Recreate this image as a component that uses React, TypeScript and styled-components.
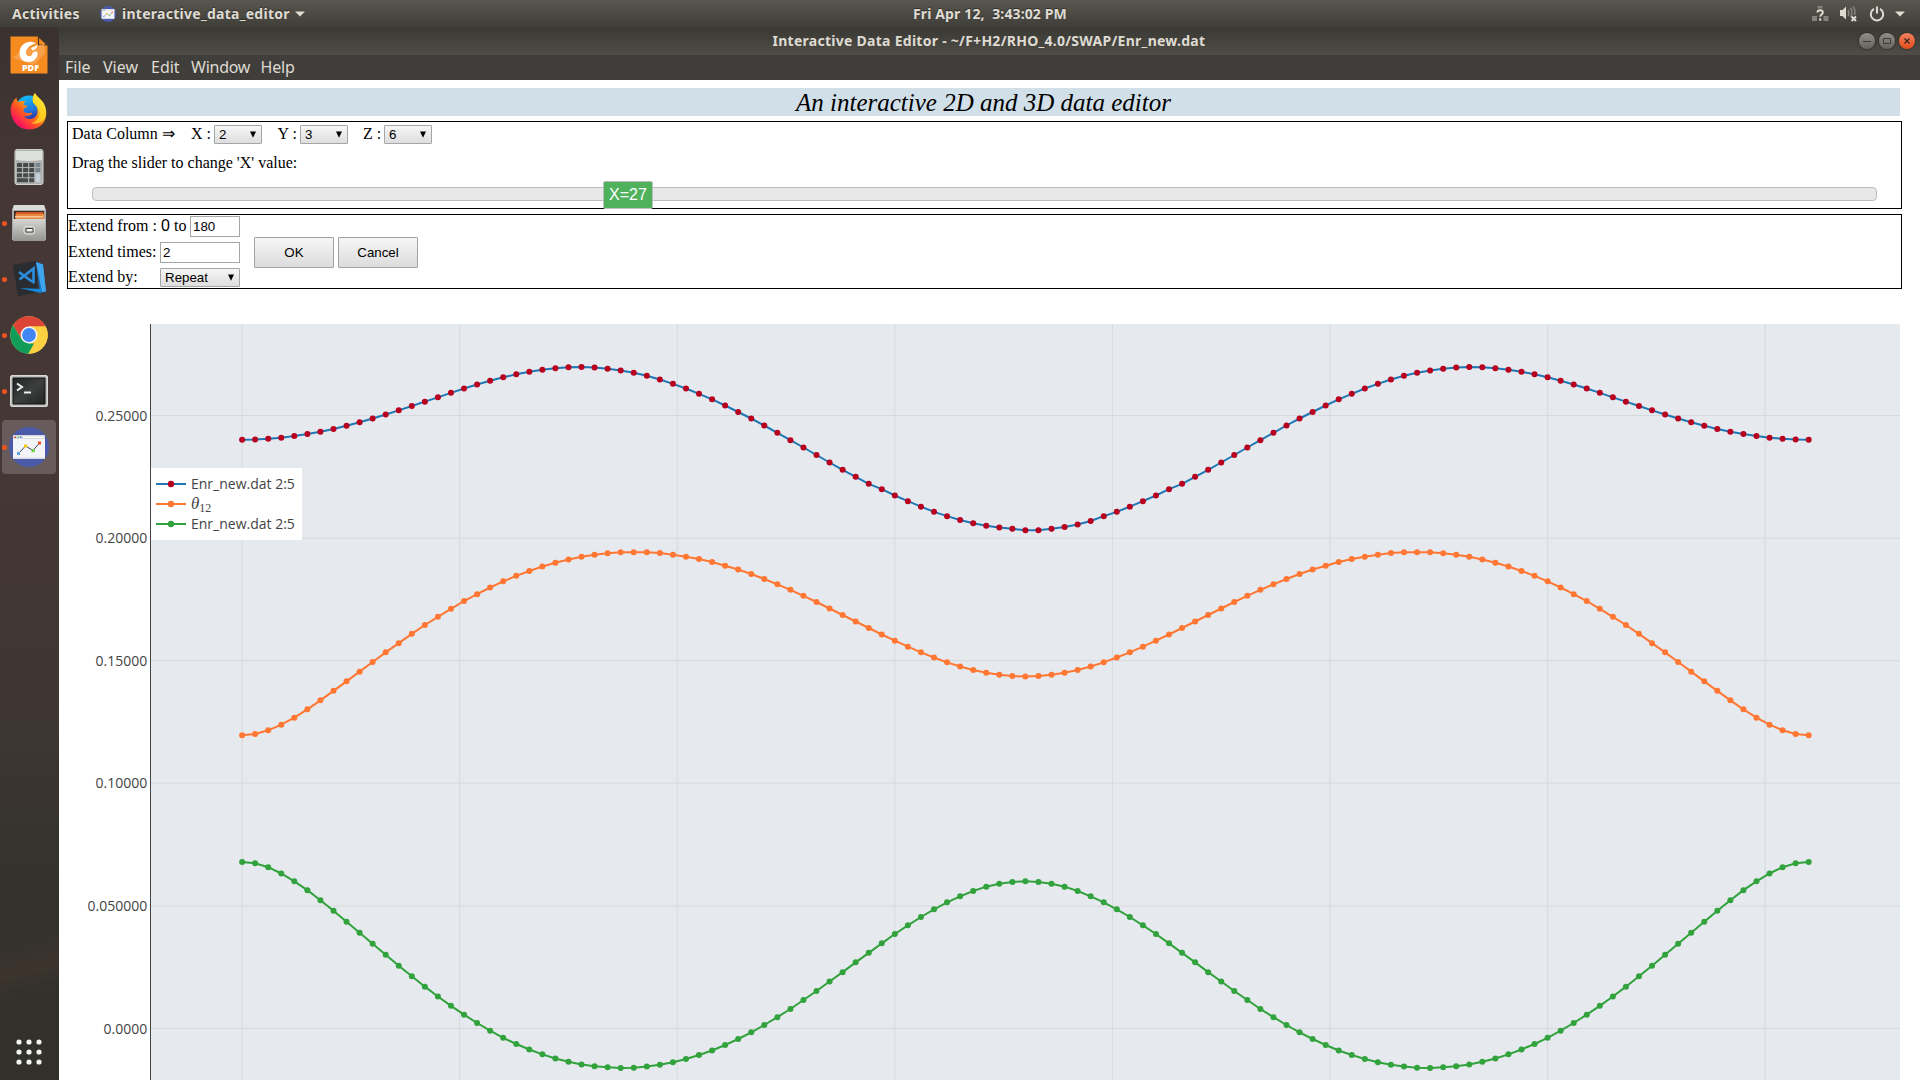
import React from "react";
import styled, { createGlobalStyle } from "styled-components";

const UI = `"Noto Sans", "Open Sans", sans-serif`;

const GlobalStyle = createGlobalStyle`
  html, body { margin: 0; padding: 0; background: #fff; overflow: hidden; }
  *, *::before, *::after { box-sizing: border-box; }
  svg { display: block; }
`;

const Desktop = styled.div`
  width: 1920px;
  height: 1080px;
  display: flex;
  flex-direction: column;
  overflow: hidden;
`;

const TopBar = styled.header`
  height: 27px;
  flex: none;
  display: grid;
  grid-template-columns: 913px 156px 1fr;
  align-items: center;
  background: linear-gradient(#5a564f, #3f3e39);
`;

const TopGroup = styled.div<{ $end?: boolean }>`
  display: flex;
  align-items: center;
  justify-content: ${(p) => (p.$end ? "flex-end" : "flex-start")};
  padding: ${(p) => (p.$end ? "0 15px 0 0" : "0 0 0 12px")};
`;

const TopLabel = styled.span<{ $width: number; $spacing?: number }>`
  width: ${(p) => p.$width}px;
  font: 700 14px/26px ${UI};
  letter-spacing: ${(p) => p.$spacing ?? 0.27}px;
  white-space: pre;
  color: #dfdbd2;
  text-shadow: 0 -1px 1px rgba(0, 0, 0, 0.4);
`;

const Gap = styled.span<{ $w: number }>`
  flex: none;
  width: ${(p) => p.$w}px;
`;

const Body = styled.div`
  flex: 1;
  min-height: 0;
  display: flex;
`;

const Dock = styled.nav`
  width: 59px;
  flex: none;
  display: flex;
  flex-direction: column;
  justify-content: space-between;
  background: 
    linear-gradient(165deg, transparent 86%, rgba(100, 60, 50, 0.14) 87.5%, rgba(105, 62, 50, 0.2) 89%, rgba(90, 55, 45, 0.06) 90.5%, transparent 94%),
    linear-gradient(#3a322f 0, #443735 14%, #443735 42%, #3e3633 66%, #33322d 82%, #31302b);
`;

const DockItems = styled.div`
  display: flex;
  flex-direction: column;
  gap: 2px;
  padding: 1px 0 0 2px;
`;

const DockSlot = styled.div<{ $active?: boolean }>`
  width: 54px;
  height: 54px;
  border-radius: 4px;
  display: grid;
  grid-template-columns: 5px 1fr 5px;
  align-items: center;
  justify-items: center;
  background: ${(p) => (p.$active ? "rgba(255,255,255,0.19)" : "transparent")};
`;

const Running = styled.i<{ $on?: boolean }>`
  width: 5px;
  height: 5px;
  border-radius: 50%;
  background: ${(p) => (p.$on ? "#f0541e" : "transparent")};
`;

const AppsButton = styled.div`
  width: 58px;
  height: 56px;
  display: flex;
  align-items: center;
  justify-content: center;
`;

const Window = styled.main`
  flex: 1;
  min-width: 0;
  display: flex;
  flex-direction: column;
  background: #fff;
`;

const TitleBar = styled.div`
  height: 28px;
  flex: none;
  display: grid;
  grid-template-columns: 1fr auto 1fr;
  align-items: center;
  background: linear-gradient(#393834, #504d46);
`;

const WindowTitle = styled.span`
  grid-column: 2;
  width: 433px;
  margin-left: -1px;
  font: 700 14px/28px ${UI};
  letter-spacing: 0.27px;
  white-space: nowrap;
  color: #dfdbd2;
`;

const WindowButtons = styled.div`
  display: flex;
  justify-content: flex-end;
  gap: 4px;
  padding-right: 5px;
`;

const RoundButton = styled.span<{ $close?: boolean }>`
  width: 16px;
  height: 16px;
  border-radius: 50%;
  display: flex;
  align-items: center;
  justify-content: center;
  background: ${(p) => (p.$close ? "linear-gradient(#f48060, #e14e1b)" : "linear-gradient(#8f8d86, #66645e)")};
  box-shadow: 0 0 1px 1px rgba(35, 34, 30, 0.55);
`;

const MenuBar = styled.div`
  height: 25px;
  flex: none;
  display: flex;
  padding-left: 6px;
  background: #403e3a;
`;

const MenuItem = styled.span<{ $width: number; $spacing: number }>`
  width: ${(p) => p.$width}px;
  font: 400 16px/24px ${UI};
  letter-spacing: ${(p) => p.$spacing}px;
  color: #dfdbd2;
`;

const Page = styled.div`
  flex: 1;
  min-height: 0;
  display: flex;
  flex-direction: column;
  padding: 8px 18px 0 8px;
  font: 16px/18px "Liberation Serif", serif;
  color: #000;
`;

const Banner = styled.h1`
  flex: none;
  width: 1833px;
  height: 28px;
  margin: 0 0 5px;
  text-align: center;
  font: italic 400 25px/30px "Liberation Serif", serif;
  background: #d1dfe8;
`;

const Panel = styled.section<{ $height: number; $after: number }>`
  flex: none;
  width: 1835px;
  height: ${(p) => p.$height}px;
  margin-bottom: ${(p) => p.$after}px;
  border: 1px solid #000;
`;

const ColumnRow = styled.div`
  display: flex;
  align-items: center;
  height: 19px;
  margin: 3px 0 0 4px;
`;

const Label = styled.span<{ $width: number }>`
  flex: none;
  width: ${(p) => p.$width}px;
  padding-bottom: 2px;
  white-space: nowrap;
`;

const Hint = styled.div`
  margin: 10px 0 0 4px;
  line-height: 18px;
`;

const SliderRow = styled.div`
  display: flex;
  align-items: center;
  height: 28px;
  margin: 8px 24px 0;
`;

const Track = styled.div`
  position: relative;
  flex: 1;
  height: 14px;
  border: 1px solid #bdbdbd;
  border-radius: 4px;
  background: #e8e8e8;
`;

const Handle = styled.span`
  position: absolute;
  top: -7px;
  left: 510px;
  width: 50px;
  height: 28px;
  border: 1px solid #bdbdbd;
  border-radius: 2px;
  background: #50b15c;
  color: #fff;
  text-align: center;
  font: 16px/26px "Liberation Sans", sans-serif;
`;

const SelectBox = styled.span<{ $width: number }>`
  flex: none;
  align-self: flex-start;
  width: ${(p) => p.$width}px;
  height: 19px;
  display: flex;
  align-items: center;
  justify-content: space-between;
  padding: 0 5px 0 4px;
  border: 1px solid #a6a6a6;
  border-radius: 1px;
  background: linear-gradient(#f6f6f6, #dedede);
  font: 13.33px/17px "Liberation Sans", sans-serif;
`;

const ExtendLayout = styled.div`
  display: flex;
  align-items: center;
  height: 100%;
`;

const ExtendFields = styled.div`
  width: 172px;
  height: 73px;
  padding-top: 1px;
  display: flex;
  flex-direction: column;
  gap: 5px;
`;

const Field = styled.div`
  display: flex;
  align-items: center;
`;

const TextInput = styled.input<{ $width: number }>`
  width: ${(p) => p.$width}px;
  height: 21px;
  margin: 0;
  padding: 1px 2px;
  border: 1px solid #a6a6a6;
  border-radius: 0;
  background: #fff;
  color: #000;
  font: 13.33px "Liberation Sans", sans-serif;
`;

const Zero = styled.span`
  width: 13px;
  padding-bottom: 2px;
  font-family: "Liberation Sans", sans-serif;
`;

const Actions = styled.div`
  display: flex;
  gap: 4px;
  margin: 2px 0 0 14px;
`;

const PushButton = styled.button`
  width: 80px;
  height: 31px;
  padding: 0;
  border: 1px solid #a2a2a2;
  border-radius: 1px;
  background: linear-gradient(#f6f6f6, #dcdcdc);
  color: #000;
  font: 13.33px "Liberation Sans", sans-serif;
`;

const ChartArea = styled.div`
  position: relative;
  flex: 1;
  min-height: 0;
  width: 1833px;
`;

const Legend = styled.div`
  position: absolute;
  left: 84px;
  top: 144px;
  width: 151px;
  height: 72px;
  padding: 6px 0 0 5px;
  background: #fff;
`;

const LegendItem = styled.div`
  display: flex;
  align-items: center;
  gap: 5px;
  height: 20px;
  font: 14px/20px "Open Sans", sans-serif;
  color: #444;
  white-space: nowrap;
`;

const Theta = styled.span`
  font: italic 17px/20px "Liberation Serif", serif;
  color: #444;
  sub {
    font: 12px/1 "Liberation Serif", serif;
    vertical-align: -3px;
  }
`;

/* Heights of the first 61 samples, in thirds of a pixel below each trace's origin.
   The samples repeat mirrored up to 360 degrees. */
const mirror = (half: number[]) => [...half, ...half.slice(0, -1).reverse()];

const redHalf = [
  269.5, 268.5, 266.5, 263, 258, 252, 245, 237, 227.5, 217, 205.5, 193.5, 181, 168, 155, 142, 128.5, 115.5, 103.5, 92.5,
  82, 73, 65.5, 59, 54.5, 51.5, 51, 52.5, 56.5, 61.5, 68.5, 77, 88.5, 101.5, 115.5, 131.5, 148, 166.5, 186, 205.5,
  226.5, 248.5, 270.5, 292.5, 315, 337.5, 359.5, 380.5, 401.5, 417.5, 436.5, 453.5, 470, 485.5, 498.5, 510, 519.5,
  527.5, 532.5, 536.5, 541,
];
const orangeHalf = [
  1156, 1152, 1141, 1124, 1103, 1078, 1051, 1022.5, 994, 965, 936, 907, 879.5, 851.5, 825, 800.5, 776.5, 753, 732.5,
  712.5, 694, 677.5, 663, 649.5, 638.5, 628.5, 620.5, 614.5, 609.5, 607, 606.5, 607, 609, 614, 620, 627, 636, 647,
  658.5, 672, 687, 703, 719.5, 737.5, 756, 775.5, 795, 814.5, 834, 853.5, 872, 890, 907, 922.5, 937, 949.5, 960, 968,
  974, 978, 979.5,
];
const greenHalf = [
  66, 70, 81.5, 100.5, 124, 150.5, 180.5, 212, 245, 278, 311, 344, 377, 408.5, 440, 469.5, 497.5, 524, 549, 572, 593.5,
  612, 628.5, 643, 655.5, 665, 673.5, 679, 682, 684, 683, 679.5, 674.5, 666.5, 657, 645, 631.5, 615, 597, 577, 555,
  531.5, 507, 480, 453, 424.5, 396.5, 367, 338.5, 310, 282, 256, 231, 208, 187, 169, 153, 140, 131, 126, 124,
];

const red = mirror(redHalf);
red[61] = 540.5;
red[62] = 536.5;
red[63] = 531;
red[64] = 523.5;
red[65] = 513;

const traces = [
  { line: "#1f77b4", dot: "#b8001f", origin: 26, values: red },
  { line: "#ff7733", dot: "#ff7733", origin: 26, values: mirror(orangeHalf) },
  { line: "#31a23c", dot: "#31a23c", origin: 516, values: mirror(greenHalf) },
];

const ticks = [
  { text: "0.25000", y: 91.5 },
  { text: "0.20000", y: 214.3 },
  { text: "0.15000", y: 336.6 },
  { text: "0.10000", y: 459.2 },
  { text: "0.050000", y: 582 },
  { text: "0.0000", y: 704.5 },
];

const Chart = () => (
  <svg width="1833" height="756" viewBox="0 0 1833 756">
    <rect x="84" y="0" width="1749" height="756" fill="#e6e9ee" />
    {[0, 1, 2, 3, 4, 5, 6, 7].map((n) => (
      <line key={n} x1={175.1 + n * 217.58} x2={175.1 + n * 217.58} y1="0" y2="756" stroke="#d7dadc" />
    ))}
    {ticks.map((t) => (
      <g key={t.text}>
        <line x1="84" x2="1833" y1={t.y} y2={t.y} stroke="#d7dadc" />
        <text x="80.2" y={t.y + 5.1} textAnchor="end" fontFamily='"Open Sans", sans-serif' fontSize="14" fill="#444">
          {t.text}
        </text>
      </g>
    ))}
    <line x1="83.5" x2="83.5" y1="0" y2="756" stroke="#444" />
    {traces.map((t) => {
      const pts = t.values.map((v, i) => [175.1 + i * 13.055, t.origin + v / 3]);
      return (
        <g key={t.line}>
          <polyline points={pts.map((p) => p.join(",")).join(" ")} fill="none" stroke={t.line} strokeWidth="2" />
          {pts.map((p, i) => (
            <circle key={i} cx={p[0]} cy={p[1]} r="3" fill={t.dot} />
          ))}
        </g>
      );
    })}
  </svg>
);

const LegendKey = ({ line, dot }: { line: string; dot: string }) => (
  <svg width="30" height="8">
    <path d="M0 4H30" stroke={line} strokeWidth="2" />
    <circle cx="15" cy="4" r="3.2" fill={dot} />
  </svg>
);

const Select = ({ value, width }: { value: string; width: number }) => (
  <SelectBox $width={width}>
    {value}
    <svg width="6" height="7">
      <path d="M0 .5h6L3 6.8z" fill="#000" />
    </svg>
  </SelectBox>
);

const EditorIcon = ({ size }: { size: number }) => (
  <svg width={size} height={size} viewBox="0 0 40 40">
    <circle cx="20" cy="20" r="20" fill="#4a5aa8" />
    <path d="M4 8h32v24H4z" fill="#f3f4f8" />
    <path d="M4 8h32v4H4zM4 30.5h32V32H4z" fill="#d8dadf" />
    <path d="M14 9.5h20v1.5H14z" fill="#fff" />
    <path d="M5.5 9.5h1.5v1.5H5.5z" fill="#e33" />
    <path d="M8.5 9.5h1.5v1.5H8.5z" fill="#5c5" />
    <path d="M11 9.5h1.5v1.5H11z" fill="#58d" />
    <path d="M9.5 26.5 16.5 19l7.5 4.5 6.5-7.5" fill="none" stroke="#444a58" />
    <path d="M8 25h3v3H8z" fill="#5aa5df" />
    <path d="M15 17.5h3.2v3H15z" fill="#f7cd12" />
    <path d="M22.5 22.2h3.2v3h-3.2z" fill="#6bd03c" />
    <path d="M29 14.5h3v3h-3z" fill="#f0502a" />
  </svg>
);

const PdfIcon = () => (
  <svg width="38" height="38" viewBox="0 0 38 38">
    <path d="M.5.5h28L37.5 9v28.5H.5z" fill="#f68b20" />
    <path d="M28.5.5v8.500h9z" fill="#f68b20" stroke="#40332d" strokeWidth="1.2" />
    <path d="M3 22 12 13l22-5 1.5 9L24 29z" fill="#faa857" opacity=".75" />
    <path d="M26 7.5C19 3 9.500 8 9.500 17c0 6 4 9 9 9 6 0 9.500-4.500 9-10-3-1.500-5 .5-5.500 2.500-.5 2.500-5.500 2.500-6-1C15.500 12 21 8.500 26 7.500z" fill="#fff" />
    <path d="M21 12c3-1.500 5.500-2 6.500-4-.5 4-1.500 5.500-5 6.500z" fill="#fff" />
    <text x="20.5" y="35" textAnchor="middle" fontFamily='"Open Sans", sans-serif' fontWeight="800" fontSize="9" fill="#fff">PDF</text>
  </svg>
);

const FirefoxIcon = () => (
  <svg width="38" height="38" viewBox="0 0 38 38">
    <defs>
      <linearGradient id="fx" x1="1" y1="0" x2="0.1" y2="1">
        <stop offset="0.1" stopColor="#fff13a" />
        <stop offset="0.42" stopColor="#ffa20f" />
        <stop offset="0.62" stopColor="#ff5622" />
        <stop offset="0.85" stopColor="#f9155d" />
      </linearGradient>
      <linearGradient id="fxb" x1="0.3" y1="0" x2="0.6" y2="1">
        <stop offset="0" stopColor="#12c0f8" />
        <stop offset="0.6" stopColor="#2470d8" />
        <stop offset="1" stopColor="#3b1c86" />
      </linearGradient>
    </defs>
    <circle cx="19" cy="17" r="13.5" fill="url(#fxb)" />
    <path d="M6.500 5.500c0 2.500 1 4 2 4.500 2-1 5-1.300 7-.5-1.500 1-2 2-2 3.500l4 .8c-.5 2-4 2.700-4 4.700 0 1.500 1.500 2 3 2.500 2 .5 3.500-.5 5-.3 1 .3.500 1.800-1 2.300-2 .8-4.500 1.500-7 1 5 6 15 2.500 14-6-.2-3-1-5-4-7-2-3-.5-8 1.500-10 1 3 4 4.500 7 8 7.500 8.500 6.500 28-13 28.500C6 37.500-1 25 1 14.500 2 11 3.500 8 6.500 5.500z" fill="url(#fx)" />
    <path d="M25 1c1 3 4 4.500 7 8 5 6 5 15 1 20-3 2-8 3-12 2.500 8-2.500 10-10 7-15-2-3.500-5-4-5-7 0-4 1-7 2-8.500z" fill="#ffe52c" opacity=".65" />
  </svg>
);

const CalculatorIcon = () => (
  <svg width="30" height="36" viewBox="0 0 30 36">
    <rect x="1" y=".5" width="28" height="35" rx="2" fill="#aeb0ad" stroke="#d1d2cf" />
    <path d="M2 2h26v9q-13 2-26 0z" fill="#dde0da" />
    {[0, 1, 2, 3].map((r) =>
      (r === 3 ? [0, 2] : [0, 1, 2]).map((c) => (
        <rect key={`${r}${c}`} x={3 + c * 6.1} y={14 + r * 5.1} width={r === 3 && c === 0 ? 11 : 5} height="4" rx=".6" fill="#454a4b" />
      ))
    )}
    <path d="M21.5 14h4.800v4h-4.800zM21.500 19.100h4.800v4h-4.800z" fill="#79858d" />
    <path d="M21.5 24.200h4.800v9h-4.800z" fill="#c3d0da" />
  </svg>
);

const FilesIcon = () => (
  <svg width="36" height="38" viewBox="0 0 36 38">
    <defs>
      <linearGradient id="fl" x1="0" y1="0" x2="0" y2="1">
        <stop offset="0" stopColor="#d5d5d3" />
        <stop offset="1" stopColor="#949492" />
      </linearGradient>
    </defs>
    <path d="M3 1h30l2 5v30H1V6z" fill="#aaa" />
    <path d="M3 1h30l1.500 5h-33z" fill="#dadad8" />
    <path d="M3 7h30v9H3z" fill="#3f2b24" />
    <path d="M4.500 9.500h29L33 15H4.500z" fill="#e98842" />
    <path d="M5 8h27v2H5z" fill="#d35b27" />
    <path d="M4 12h28v1.500H4z" fill="#f6c795" />
    <path d="M2 15h32v22H2z" fill="url(#fl)" />
    <rect x="13" y="22.5" width="10.5" height="7.5" rx="2" fill="#b4b4b2" stroke="#e2e2e0" />
    <path d="M15 24.500h7v3.500h-7z" fill="#f3f3f1" stroke="#444" />
  </svg>
);

const CodeIcon = () => (
  <svg width="36" height="38" viewBox="0 0 36 38">
    <path d="M2 5 25 1l2 31L7 36.500z" fill="#292d31" />
    <path d="m25 2 7 2.500 3 27L29 33z" fill="#0a73c4" />
    <path d="m25 2 7 2.500 3 27-4 .5z" fill="#3fa4ec" />
    <path d="m8.500 28 22.500 1-1.500 4z" fill="#1687d9" />
    <path d="m8 12 13 9.500M8.500 19.500 22.500 8.500v15" fill="none" stroke="#2b8ddd" strokeWidth="2.6" />
  </svg>
);

const ChromeIcon = () => (
  <svg width="38" height="38" viewBox="0 0 38 38">
    <circle cx="19" cy="19" r="18.7" fill="#fdd041" />
    <path d="M19 10.500h16.700A18.700 18.700 0 0 0 3 9.300L11.500 23z" fill="#dc4437" />
    <path d="M3 9.300 11.600 23.300 19 27.500h7.300L18.300 37.700A18.700 18.700 0 0 1 3 9.300z" fill="#119d59" />
    <path d="m26.400 23.300-8.100 14.400A18.700 18.700 0 0 0 35.700 10.500H19z" fill="#fdd041" />
    <circle cx="19" cy="19" r="8.5" fill="#f2f3f5" />
    <circle cx="19" cy="19" r="6.9" fill="#4285f4" />
  </svg>
);

const TerminalIcon = () => (
  <svg width="38" height="32" viewBox="0 0 38 32">
    <defs>
      <linearGradient id="tm" x1="0" y1="0" x2="1" y2="1">
        <stop offset="0" stopColor="#202326" />
        <stop offset=".5" stopColor="#3d3f3e" />
        <stop offset="1" stopColor="#222423" />
      </linearGradient>
    </defs>
    <rect x=".5" y=".5" width="37" height="31" rx="1.5" fill="#bfc0be" stroke="#d7d7d5" />
    <path d="M3 3h32v26H3z" fill="url(#tm)" stroke="#111" />
    <path d="m7 8.500 5 3.500-5 3.500M14 17.500h7" fill="none" stroke="#eee" strokeWidth="2" />
  </svg>
);

const dockItems = [
  { Icon: PdfIcon, running: false },
  { Icon: FirefoxIcon, running: false },
  { Icon: CalculatorIcon, running: false },
  { Icon: FilesIcon, running: true },
  { Icon: CodeIcon, running: true },
  { Icon: ChromeIcon, running: true },
  { Icon: TerminalIcon, running: true },
];

const DownArrow = () => (
  <svg width="10" height="6">
    <path d="M0 .5h10L5 5.500z" fill="#dfdbd2" />
  </svg>
);

const NetworkIcon = () => (
  <svg width="17" height="17" viewBox="0 0 17 17">
    <path d="M5.500 1h5v2.500h-5zM0 11h5v5H0zM11.500 11h5v5h-5z" fill="#85827b" />
    <path d="M5.500 7.500c0-3 5.300-3 5.300 0 0 2-2.600 2-2.600 4.300M8.200 13.300v2.400" fill="none" stroke="#dfdbd2" strokeWidth="2" />
  </svg>
);

const VolumeIcon = () => (
  <svg width="17" height="17" viewBox="0 0 17 17">
    <path d="M0 5h2.500L6 1.500v13L2.500 11H0z" fill="#dfdbd2" />
    <path d="M8 5q2 3 0 6M10.500 3q3 4.500 0 9M13 1.500q3 4 1.500 8.500" fill="none" stroke="#85827b" strokeWidth="1.6" />
    <path d="m11.500 11.500 4.500 4.500m0-4.500L11.500 16" stroke="#dfdbd2" strokeWidth="2" />
  </svg>
);

const PowerIcon = () => (
  <svg width="16" height="16" viewBox="0 0 16 16">
    <path d="M5 2.800a6.200 6.200 0 1 0 6 0M8 .5v7" fill="none" stroke="#dfdbd2" strokeWidth="2" />
  </svg>
);

export default function App() {
  return (
    <Desktop>
      <GlobalStyle />
      <TopBar>
        <TopGroup>
          <TopLabel $width={88}>Activities</TopLabel>
          <EditorIcon size={16} />
          <Gap $w={6} />
          <TopLabel $width={173}>interactive_data_editor</TopLabel>
          <DownArrow />
        </TopGroup>
        <TopLabel $width={156} $spacing={0.13}>{"Fri Apr 12,  3:43:02 PM"}</TopLabel>
        <TopGroup $end>
          <NetworkIcon />
          <Gap $w={11} />
          <VolumeIcon />
          <Gap $w={12} />
          <PowerIcon />
          <Gap $w={10} />
          <DownArrow />
        </TopGroup>
      </TopBar>
      <Body>
        <Dock>
          <DockItems>
            {dockItems.map(({ Icon, running }, i) => (
              <DockSlot key={i}>
                <Running $on={running} />
                <Icon />
              </DockSlot>
            ))}
            <DockSlot $active>
              <Running $on />
              <EditorIcon size={40} />
            </DockSlot>
          </DockItems>
          <AppsButton>
            <svg width="26" height="26">
              {[3, 13, 23].map((y) => [3, 13, 23].map((x) => <circle key={`${x}-${y}`} cx={x} cy={y} r="2.6" fill="#f4f4f2" />))}
            </svg>
          </AppsButton>
        </Dock>
        <Window>
          <TitleBar>
            <WindowTitle>Interactive Data Editor - ~/F+H2/RHO_4.0/SWAP/Enr_new.dat</WindowTitle>
            <WindowButtons>
              <RoundButton>
                <svg width="8" height="8"><path d="M0 4.500h8" stroke="#3c3b37" /></svg>
              </RoundButton>
              <RoundButton>
                <svg width="8" height="8"><path d="M.5 1.500h7v5h-7z" fill="none" stroke="#3c3b37" /></svg>
              </RoundButton>
              <RoundButton $close>
                <svg width="8" height="8"><path d="m1.500 1.500 5 5m0-5-5 5" stroke="#3c2a22" strokeWidth="1.3" /></svg>
              </RoundButton>
            </WindowButtons>
          </TitleBar>
          <MenuBar>
            <MenuItem $width={38} $spacing={0}>File</MenuItem>
            <MenuItem $width={48} $spacing={0}>View</MenuItem>
            <MenuItem $width={40} $spacing={0}>Edit</MenuItem>
            <MenuItem $width={69.5} $spacing={-0.25}>Window</MenuItem>
            <MenuItem $width={40} $spacing={-0.2}>Help</MenuItem>
          </MenuBar>
          <Page>
            <Banner>An interactive 2D and 3D data editor</Banner>
            <Panel $height={88} $after={5}>
              <ColumnRow>
                <Label $width={119}>Data Column ⇒</Label>
                <Label $width={23}>X :</Label>
                <Select value="2" width={48} />
                <Gap $w={15.5} />
                <Label $width={22.5}>Y :</Label>
                <Select value="3" width={48} />
                <Gap $w={15} />
                <Label $width={21}>Z :</Label>
                <Select value="6" width={48} />
              </ColumnRow>
              <Hint>Drag the slider to change 'X' value:</Hint>
              <SliderRow>
                <Track>
                  <Handle>X=27</Handle>
                </Track>
              </SliderRow>
            </Panel>
            <Panel $height={75} $after={35}>
              <ExtendLayout>
                <ExtendFields>
                  <Field>
                    <Label $width={93}>Extend from :</Label>
                    <Zero>0</Zero>
                    <Label $width={16}>to</Label>
                    <TextInput $width={50} defaultValue="180" />
                  </Field>
                  <Field>
                    <Label $width={92}>Extend times:</Label>
                    <TextInput $width={80} defaultValue="2" />
                  </Field>
                  <Field>
                    <Label $width={92}>Extend by:</Label>
                    <Select value="Repeat" width={80} />
                  </Field>
                </ExtendFields>
                <Actions>
                  <PushButton>OK</PushButton>
                  <PushButton>Cancel</PushButton>
                </Actions>
              </ExtendLayout>
            </Panel>
            <ChartArea>
              <Chart />
              <Legend>
                <LegendItem>
                  <LegendKey line="#1f77b4" dot="#b8001f" />
                  Enr_new.dat 2:5
                </LegendItem>
                <LegendItem>
                  <LegendKey line="#ff7733" dot="#ff7733" />
                  <Theta>θ<sub>12</sub></Theta>
                </LegendItem>
                <LegendItem>
                  <LegendKey line="#31a23c" dot="#31a23c" />
                  Enr_new.dat 2:5
                </LegendItem>
              </Legend>
            </ChartArea>
          </Page>
        </Window>
      </Body>
    </Desktop>
  );
}
